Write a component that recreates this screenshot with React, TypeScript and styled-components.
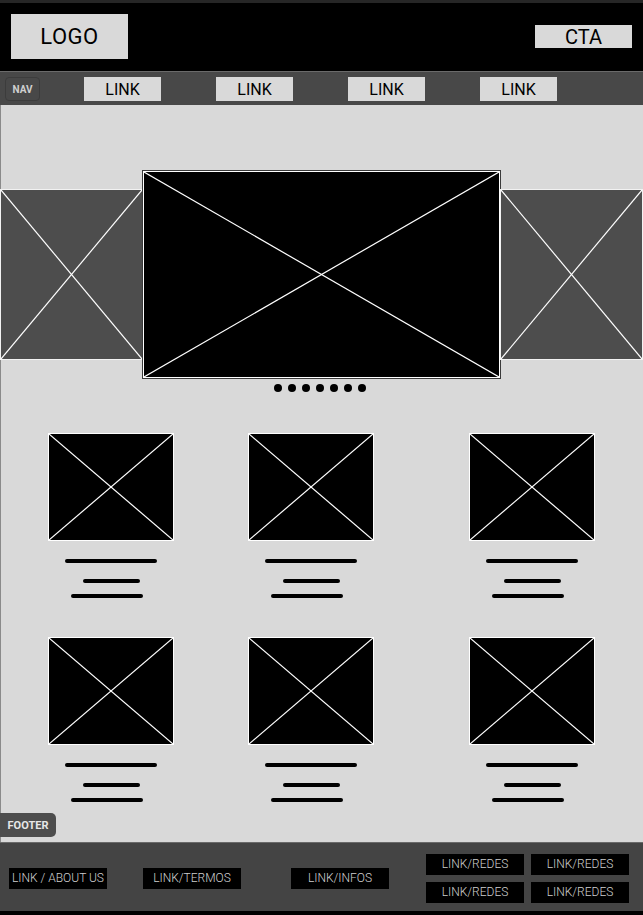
import styled, { createGlobalStyle } from "styled-components";

const GlobalStyle = createGlobalStyle`
  html, body {
    margin: 0;
    padding: 0;
    background: #000;
  }
  body {
    font-family: Roboto, "Liberation Sans", sans-serif;
  }
`;

// X placeholder drawn as a picture, stretched to whatever box holds it
const Cross = () => (
  <svg width="100%" height="100%" viewBox="0 0 100 100" preserveAspectRatio="none">
    <line x1="0" y1="0" x2="100" y2="100" stroke="#fff" strokeWidth="1.2" vectorEffect="non-scaling-stroke" />
    <line x1="100" y1="0" x2="0" y2="100" stroke="#fff" strokeWidth="1.2" vectorEffect="non-scaling-stroke" />
  </svg>
);

const cards = [0, 1, 2, 3, 4, 5];
const dots = [0, 1, 2, 3, 4, 5, 6];

const App = () => {
  return (
    <>
      <GlobalStyle />
      <Page>
        <Header>
          <LogoBox>LOGO</LogoBox>
          <CtaBox>CTA</CtaBox>
        </Header>
        <Nav>
          <NavBadge>NAV</NavBadge>
          <NavLinks>
            <NavLink>LINK</NavLink>
            <NavLink>LINK</NavLink>
            <NavLink>LINK</NavLink>
            <NavLink>LINK</NavLink>
          </NavLinks>
        </Nav>
        <Main>
          <Carousel>
            <SideSlide>
              <Cross />
            </SideSlide>
            <MainSlide>
              <Cross />
            </MainSlide>
            <SideSlide>
              <Cross />
            </SideSlide>
          </Carousel>
          <Dots>
            {dots.map((d) => (
              <Dot key={d} />
            ))}
          </Dots>
          <CardGrid>
            {cards.map((c) => (
              <Card key={c}>
                <CardImage>
                  <Cross />
                </CardImage>
                <TextLine $w={92} $mt={18} />
                <TextLine $w={57} $mt={16} />
                <TextLine $w={72} $mt={11} $shift={8} />
              </Card>
            ))}
          </CardGrid>
          <FooterBadge>FOOTER</FooterBadge>
        </Main>
        <Footer>
          <FooterLink>LINK / ABOUT US</FooterLink>
          <FooterLink>LINK/TERMOS</FooterLink>
          <FooterLink>LINK/INFOS</FooterLink>
          <SocialGrid>
            <FooterLink>LINK/REDES</FooterLink>
            <FooterLink>LINK/REDES</FooterLink>
            <FooterLink>LINK/REDES</FooterLink>
            <FooterLink>LINK/REDES</FooterLink>
          </SocialGrid>
        </Footer>
        <BottomStrip />
      </Page>
    </>
  );
};

export default App;

const Page = styled.div`
  width: 643px;
  height: 915px;
  display: flex;
  flex-direction: column;
  background: #d9d9d9;
  overflow: hidden;
`;

const Header = styled.header`
  height: 68px;
  border-top: 3px solid #262626;
  background: #000;
  display: flex;
  align-items: flex-start;
  justify-content: space-between;
  padding: 0 11px;
  box-sizing: content-box;
`;

const LogoBox = styled.div`
  margin-top: 11px;
  width: 117px;
  height: 45px;
  background: #d9d9d9;
  display: flex;
  align-items: center;
  justify-content: center;
  font-size: 22px;
  color: #000;
  letter-spacing: 0.5px;
`;

const CtaBox = styled.div`
  margin-top: 22px;
  width: 97px;
  height: 23px;
  background: #d9d9d9;
  display: flex;
  align-items: center;
  justify-content: center;
  font-size: 20px;
  color: #000;
`;

const Nav = styled.nav`
  height: 34px;
  border-top: 1px solid #6a6a6a;
  background: #484848;
  display: flex;
  align-items: flex-start;
  padding: 5px 0 0 5px;
  box-sizing: border-box;
`;

const NavBadge = styled.div`
  width: 33px;
  height: 22px;
  border: 1px solid #3c3c3c;
  border-radius: 4px;
  display: flex;
  align-items: center;
  justify-content: center;
  font-size: 10px;
  font-weight: 700;
  color: #cfcfcf;
`;

const NavLinks = styled.div`
  display: flex;
  gap: 55px;
  margin-left: 44px;
`;

const NavLink = styled.div`
  width: 77px;
  height: 24px;
  background: #d9d9d9;
  display: flex;
  align-items: center;
  justify-content: center;
  font-size: 16px;
  color: #000;
`;

const Main = styled.main`
  flex: 1;
  display: flex;
  flex-direction: column;
  border-left: 1px solid #8a8a8a;
  padding-top: 66px;
`;

const Carousel = styled.div`
  display: flex;
  align-items: center;
  margin-left: -1px;
`;

const SideSlide = styled.div`
  width: 141px;
  height: 169px;
  background: #4d4d4d;
  border: 1px solid #f2f2f2;
  display: flex;
`;

const MainSlide = styled.div`
  width: 355px;
  height: 205px;
  background: #000;
  border: 1px solid #fff;
  outline: 1px solid #3a3a3a;
  display: flex;
`;

const Dots = styled.div`
  display: flex;
  justify-content: center;
  gap: 6px;
  margin: 6px 0 0 -4px;
`;

const Dot = styled.span`
  width: 8px;
  height: 8px;
  border-radius: 50%;
  background: #000;
`;

const CardGrid = styled.div`
  display: grid;
  grid-template-columns: 200px 221px 126px;
  row-gap: 39px;
  padding-left: 47px;
  margin-top: 41px;
`;

const Card = styled.div`
  width: 126px;
  display: flex;
  flex-direction: column;
  align-items: center;
`;

const CardImage = styled.div`
  width: 124px;
  height: 106px;
  background: #000;
  border: 1px solid #fff;
  display: flex;
`;

const TextLine = styled.div<{ $w: number; $mt: number; $shift?: number }>`
  width: ${(p) => p.$w}px;
  height: 4px;
  border-radius: 2px;
  background: #000;
  margin-top: ${(p) => p.$mt}px;
  margin-right: ${(p) => p.$shift ?? 0}px;
`;

const FooterBadge = styled.div`
  margin-top: auto;
  margin-bottom: 5px;
  margin-left: -1px;
  width: 56px;
  height: 24px;
  background: #4d4d4d;
  border-radius: 0 5px 5px 0;
  display: flex;
  align-items: center;
  justify-content: center;
  font-size: 11px;
  font-weight: 700;
  color: #e6e6e6;
`;

const Footer = styled.footer`
  height: 68px;
  background: #444;
  border-top: 1px solid #6a6a6a;
  display: grid;
  grid-template-columns: 134px 148px 135px auto;
  align-items: center;
  padding: 2px 0 0 9px;
  box-sizing: border-box;
  height: 69px;
`;

const FooterLink = styled.div`
  width: 98px;
  height: 21px;
  background: #000;
  display: flex;
  align-items: center;
  justify-content: center;
  font-size: 12px;
  font-weight: 300;
  color: #cfcfcf;
  white-space: nowrap;
`;

const SocialGrid = styled.div`
  display: grid;
  grid-template-columns: 98px 98px;
  column-gap: 7px;
  row-gap: 7px;
`;

const BottomStrip = styled.div`
  height: 4px;
  background: #000;
`;
